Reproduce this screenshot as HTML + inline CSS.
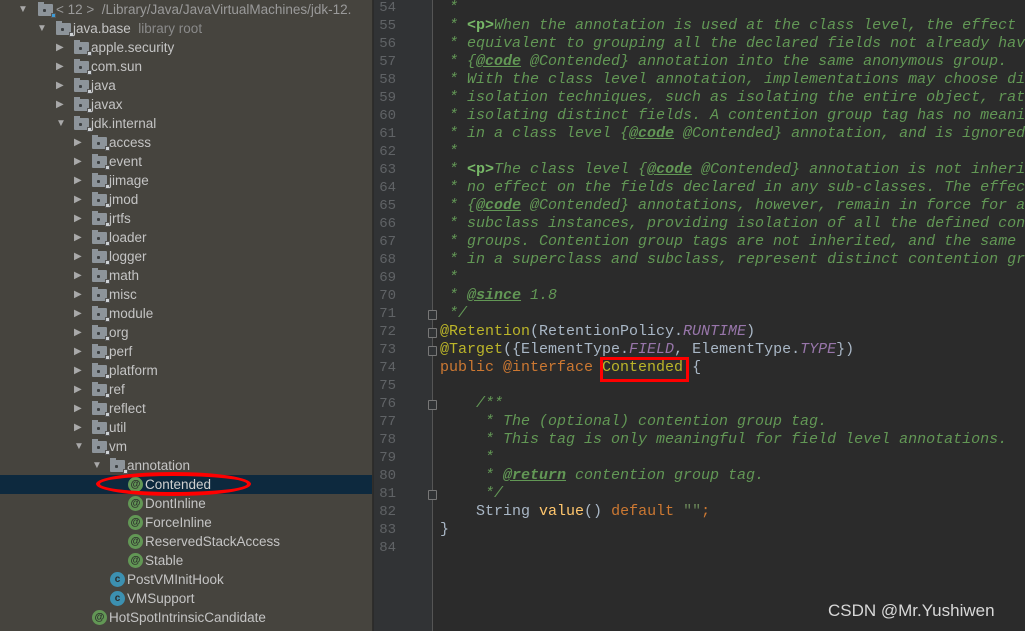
<!DOCTYPE html>
<html><head><meta charset="utf-8"><style>
*{margin:0;padding:0;box-sizing:border-box}
body{width:1025px;height:631px;overflow:hidden;background:#2b2b2b;position:relative;font-family:"Liberation Sans",sans-serif}
#tree{position:absolute;left:0;top:0;width:373px;height:631px;background:#46443e;border-right:1px solid #2f2e2b;overflow:hidden}
.r{position:absolute;height:19px;line-height:19px;font-size:13.5px;color:#c4c4c4;white-space:nowrap}
.ar{position:absolute;top:0;font-size:10px;color:#a9a9a9}
.fd{position:absolute;top:4px;width:15px;height:12px;background:#8d949a;border-radius:1px}
.fd:before{content:"";position:absolute;left:0;top:-2px;width:6px;height:3px;background:#8d949a}
.fd:after{content:"";position:absolute;left:5px;top:5px;width:3px;height:3px;background:#3c3f41;border-radius:1px}
.lk{position:absolute;right:-3px;bottom:-2px;width:5px;height:5px;background:#cfd3d6;border:1px solid #555}
.an,.cl{position:absolute;top:2px;width:15px;height:15px;border-radius:50%;background:#629755;color:#2b2b2b;font-size:10px;line-height:15px;text-align:center;font-weight:bold}
.cl{background:#3c90b0}
.tx{position:absolute;top:0}
#sel{position:absolute;left:0;top:475px;width:373px;height:19px;background:#0d293e}
#gut{position:absolute;left:374px;top:0;width:59px;height:631px;background:#313335;border-right:1px solid #555}
.ln{position:absolute;left:374px;width:22px;text-align:right;font-family:"Liberation Mono",monospace;font-size:14px;color:#606366;height:18px;line-height:18px;overflow:hidden;direction:rtl}
.cd{position:absolute;left:440px;width:585px;overflow:hidden;font-family:"Liberation Mono",monospace;font-size:15px;height:18px;line-height:18px;white-space:pre;color:#a9b7c6}
.c{color:#629755;font-style:italic}
.t{color:#629755;font-weight:bold;text-decoration:underline;font-style:italic}
.p{color:#77b767;font-weight:bold;font-style:normal}
.a{color:#bbb529}.k{color:#cc7832}.pu{color:#9876aa;font-style:italic}.f{color:#ffc66d}.s{color:#6a8759}
.fold{position:absolute;left:428px;width:9px;height:10px;border:1px solid #777;border-radius:1px;background:#313335}
</style></head><body>
<div id="tree">
<div id="sel"></div>
<div class="r" style="top:0;left:0;width:373px"><span class="ar" style="left:18px">▼</span><span class="fd" style="left:38px"><span class="lk" style="background:#3d9bd6"></span></span><span class="tx" style="left:56px;color:#9a9a9a">&lt; 12 &gt;&nbsp; /Library/Java/JavaVirtualMachines/jdk-12.</span></div>
<div class="r" style="top:19px"><span class="ar" style="left:37px">▼</span><span class="fd" style="left:56px"><span class="lk"></span></span><span class="tx" style="left:73px">java.base <span style="color:#8a8a8a">&nbsp;library root</span></span></div>
<div class="r" style="top:38px"><span class="ar" style="left:56px">▶</span><span class="fd" style="left:74px"><span class="lk"></span></span><span class="tx" style="left:91px">apple.security</span></div>
<div class="r" style="top:57px"><span class="ar" style="left:56px">▶</span><span class="fd" style="left:74px"><span class="lk"></span></span><span class="tx" style="left:91px">com.sun</span></div>
<div class="r" style="top:76px"><span class="ar" style="left:56px">▶</span><span class="fd" style="left:74px"><span class="lk"></span></span><span class="tx" style="left:91px">java</span></div>
<div class="r" style="top:95px"><span class="ar" style="left:56px">▶</span><span class="fd" style="left:74px"><span class="lk"></span></span><span class="tx" style="left:91px">javax</span></div>
<div class="r" style="top:114px"><span class="ar" style="left:56px">▼</span><span class="fd" style="left:74px"><span class="lk"></span></span><span class="tx" style="left:91px">jdk.internal</span></div>
<div class="r" style="top:133px"><span class="ar" style="left:74px">▶</span><span class="fd" style="left:92px"><span class="lk"></span></span><span class="tx" style="left:109px">access</span></div>
<div class="r" style="top:152px"><span class="ar" style="left:74px">▶</span><span class="fd" style="left:92px"><span class="lk"></span></span><span class="tx" style="left:109px">event</span></div>
<div class="r" style="top:171px"><span class="ar" style="left:74px">▶</span><span class="fd" style="left:92px"><span class="lk"></span></span><span class="tx" style="left:109px">jimage</span></div>
<div class="r" style="top:190px"><span class="ar" style="left:74px">▶</span><span class="fd" style="left:92px"><span class="lk"></span></span><span class="tx" style="left:109px">jmod</span></div>
<div class="r" style="top:209px"><span class="ar" style="left:74px">▶</span><span class="fd" style="left:92px"><span class="lk"></span></span><span class="tx" style="left:109px">jrtfs</span></div>
<div class="r" style="top:228px"><span class="ar" style="left:74px">▶</span><span class="fd" style="left:92px"><span class="lk"></span></span><span class="tx" style="left:109px">loader</span></div>
<div class="r" style="top:247px"><span class="ar" style="left:74px">▶</span><span class="fd" style="left:92px"><span class="lk"></span></span><span class="tx" style="left:109px">logger</span></div>
<div class="r" style="top:266px"><span class="ar" style="left:74px">▶</span><span class="fd" style="left:92px"><span class="lk"></span></span><span class="tx" style="left:109px">math</span></div>
<div class="r" style="top:285px"><span class="ar" style="left:74px">▶</span><span class="fd" style="left:92px"><span class="lk"></span></span><span class="tx" style="left:109px">misc</span></div>
<div class="r" style="top:304px"><span class="ar" style="left:74px">▶</span><span class="fd" style="left:92px"><span class="lk"></span></span><span class="tx" style="left:109px">module</span></div>
<div class="r" style="top:323px"><span class="ar" style="left:74px">▶</span><span class="fd" style="left:92px"><span class="lk"></span></span><span class="tx" style="left:109px">org</span></div>
<div class="r" style="top:342px"><span class="ar" style="left:74px">▶</span><span class="fd" style="left:92px"><span class="lk"></span></span><span class="tx" style="left:109px">perf</span></div>
<div class="r" style="top:361px"><span class="ar" style="left:74px">▶</span><span class="fd" style="left:92px"><span class="lk"></span></span><span class="tx" style="left:109px">platform</span></div>
<div class="r" style="top:380px"><span class="ar" style="left:74px">▶</span><span class="fd" style="left:92px"><span class="lk"></span></span><span class="tx" style="left:109px">ref</span></div>
<div class="r" style="top:399px"><span class="ar" style="left:74px">▶</span><span class="fd" style="left:92px"><span class="lk"></span></span><span class="tx" style="left:109px">reflect</span></div>
<div class="r" style="top:418px"><span class="ar" style="left:74px">▶</span><span class="fd" style="left:92px"><span class="lk"></span></span><span class="tx" style="left:109px">util</span></div>
<div class="r" style="top:437px"><span class="ar" style="left:74px">▼</span><span class="fd" style="left:92px"><span class="lk"></span></span><span class="tx" style="left:109px">vm</span></div>
<div class="r" style="top:456px"><span class="ar" style="left:92px">▼</span><span class="fd" style="left:110px"><span class="lk"></span></span><span class="tx" style="left:127px">annotation</span></div>
<div class="r" style="top:475px"><span class="an" style="left:128px">@</span><span class="tx" style="left:145px;color:#d0d0d0">Contended</span></div>
<div class="r" style="top:494px"><span class="an" style="left:128px">@</span><span class="tx" style="left:145px">DontInline</span></div>
<div class="r" style="top:513px"><span class="an" style="left:128px">@</span><span class="tx" style="left:145px">ForceInline</span></div>
<div class="r" style="top:532px"><span class="an" style="left:128px">@</span><span class="tx" style="left:145px">ReservedStackAccess</span></div>
<div class="r" style="top:551px"><span class="an" style="left:128px">@</span><span class="tx" style="left:145px">Stable</span></div>
<div class="r" style="top:570px"><span class="cl" style="left:110px">c</span><span class="tx" style="left:127px">PostVMInitHook</span></div>
<div class="r" style="top:589px"><span class="cl" style="left:110px">c</span><span class="tx" style="left:127px">VMSupport</span></div>
<div class="r" style="top:608px"><span class="an" style="left:92px">@</span><span class="tx" style="left:109px">HotSpotIntrinsicCandidate</span></div>
<div style="position:absolute;left:96px;top:472px;width:155px;height:24px;border:4px solid #f00;border-radius:50%"></div>
</div>
<div id="gut"></div>
<div class="ln" style="top:-1px">54</div><div class="ln" style="top:17px">55</div><div class="ln" style="top:35px">56</div><div class="ln" style="top:53px">57</div><div class="ln" style="top:71px">58</div><div class="ln" style="top:89px">59</div><div class="ln" style="top:107px">60</div><div class="ln" style="top:125px">61</div><div class="ln" style="top:143px">62</div><div class="ln" style="top:161px">63</div><div class="ln" style="top:179px">64</div><div class="ln" style="top:197px">65</div><div class="ln" style="top:215px">66</div><div class="ln" style="top:233px">67</div><div class="ln" style="top:251px">68</div><div class="ln" style="top:269px">69</div><div class="ln" style="top:287px">70</div><div class="ln" style="top:305px">71</div><div class="ln" style="top:323px">72</div><div class="ln" style="top:341px">73</div><div class="ln" style="top:359px">74</div><div class="ln" style="top:377px">75</div><div class="ln" style="top:395px">76</div><div class="ln" style="top:413px">77</div><div class="ln" style="top:431px">78</div><div class="ln" style="top:449px">79</div><div class="ln" style="top:467px">80</div><div class="ln" style="top:485px">81</div><div class="ln" style="top:503px">82</div><div class="ln" style="top:521px">83</div><div class="ln" style="top:539px">84</div>
<div class="fold" style="top:310px"></div><div class="fold" style="top:328px"></div><div class="fold" style="top:346px"></div><div class="fold" style="top:400px"></div><div class="fold" style="top:490px"></div>
<div class="cd c" style="top:-1px"> *</div>
<div class="cd c" style="top:17px"> * <span class="p">&lt;p&gt;</span>When the annotation is used at the class level, the effect is</div>
<div class="cd c" style="top:35px"> * equivalent to grouping all the declared fields not already having</div>
<div class="cd c" style="top:53px"> * {<span class="t">@code</span> @Contended} annotation into the same anonymous group.</div>
<div class="cd c" style="top:71px"> * With the class level annotation, implementations may choose different</div>
<div class="cd c" style="top:89px"> * isolation techniques, such as isolating the entire object, rather than</div>
<div class="cd c" style="top:107px"> * isolating distinct fields. A contention group tag has no meaning</div>
<div class="cd c" style="top:125px"> * in a class level {<span class="t">@code</span> @Contended} annotation, and is ignored.</div>
<div class="cd c" style="top:143px"> *</div>
<div class="cd c" style="top:161px"> * <span class="p">&lt;p&gt;</span>The class level {<span class="t">@code</span> @Contended} annotation is not inherited and has</div>
<div class="cd c" style="top:179px"> * no effect on the fields declared in any sub-classes. The effects of all</div>
<div class="cd c" style="top:197px"> * {<span class="t">@code</span> @Contended} annotations, however, remain in force for all</div>
<div class="cd c" style="top:215px"> * subclass instances, providing isolation of all the defined contention</div>
<div class="cd c" style="top:233px"> * groups. Contention group tags are not inherited, and the same tag used</div>
<div class="cd c" style="top:251px"> * in a superclass and subclass, represent distinct contention groups.</div>
<div class="cd c" style="top:269px"> *</div>
<div class="cd c" style="top:287px"> * <span class="t">@since</span> 1.8</div>
<div class="cd c" style="top:305px"> */</div>
<div class="cd" style="top:323px"><span class="a">@Retention</span>(RetentionPolicy.<span class="pu">RUNTIME</span>)</div>
<div class="cd" style="top:341px"><span class="a">@Target</span>({ElementType.<span class="pu">FIELD</span>, ElementType.<span class="pu">TYPE</span>})</div>
<div class="cd" style="top:359px"><span class="k">public @interface</span> <span class="a">Contended</span> {</div>
<div class="cd c" style="top:395px">    /**</div>
<div class="cd c" style="top:413px">     * The (optional) contention group tag.</div>
<div class="cd c" style="top:431px">     * This tag is only meaningful for field level annotations.</div>
<div class="cd c" style="top:449px">     *</div>
<div class="cd c" style="top:467px">     * <span class="t">@return</span> contention group tag.</div>
<div class="cd c" style="top:485px">     */</div>
<div class="cd" style="top:503px">    String <span class="f">value</span>() <span class="k">default</span> <span class="s">""</span><span class="k">;</span></div>
<div class="cd" style="top:521px">}</div>
<div style="position:absolute;left:600px;top:357px;width:89px;height:25px;border:3px solid #f00"></div>
<div style="position:absolute;left:828px;top:601px;font-size:17px;color:#d8d8d8;font-family:'Liberation Sans',sans-serif">CSDN @Mr.Yushiwen</div>
</body></html>
